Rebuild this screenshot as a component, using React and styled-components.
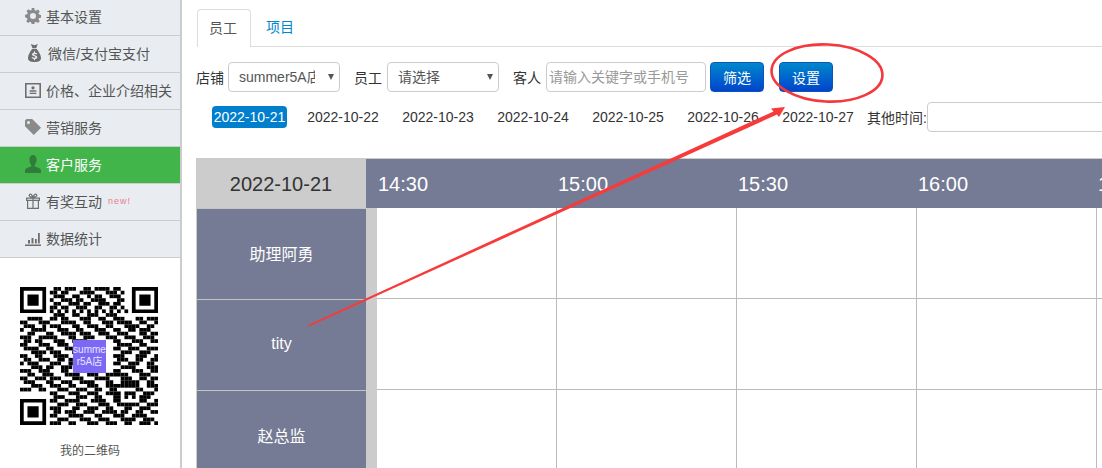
import React from "react";
import styled, { createGlobalStyle } from "styled-components";

const GlobalStyle = createGlobalStyle`
  html, body {
    margin: 0;
    padding: 0;
    background: #fff;
    overflow: hidden;
  }
  body {
    font-family: "Liberation Sans", "Noto Sans CJK SC", sans-serif;
    font-size: 14px;
    color: #333;
  }
`;

const Page = styled.div`
  position: relative;
  display: flex;
  width: 1102px;
  height: 468px;
  overflow: hidden;
`;

const Sidebar = styled.aside`
  flex: none;
  width: 180px;
  height: 468px;
  border-right: 2px solid #ccc;
`;

const MenuList = styled.div`
  background: #e9edf1;
`;

const MenuItem = styled.div`
  display: flex;
  align-items: center;
  box-sizing: border-box;
  height: ${({ $first }) => ($first ? "36px" : "37px")};
  padding-left: ${({ $indent }) => $indent || 25}px;
  padding-bottom: ${({ $first }) => ($first ? "3px" : "2px")};
  border-bottom: 1px solid #ccc;
  background: ${({ $active }) => ($active ? "#41b549" : "transparent")};
  color: ${({ $active }) => ($active ? "#fff" : "#555")};
  svg {
    flex: none;
    margin-right: ${({ $gap }) => $gap || 5}px;
  }
`;

const NewMark = styled.span`
  margin-left: 6px;
  font-size: 9px;
  letter-spacing: 1px;
  color: #ea7a92;
`;

const QrBlock = styled.div`
  display: flex;
  flex-direction: column;
  align-items: center;
  padding-top: 29px;
`;

const QrFrame = styled.div`
  position: relative;
  width: 138px;
  height: 138px;
  margin-left: -2px;
`;

const QrLogo = styled.div`
  position: absolute;
  left: 53px;
  top: 53px;
  width: 33px;
  height: 33px;
  padding-top: 4px;
  box-sizing: border-box;
  background: #7b68f5;
  color: #e8e4ff;
  font-size: 10px;
  line-height: 12px;
  text-align: center;
  word-break: break-all;
`;

const QrCaption = styled.div`
  margin-top: 16px;
  font-size: 12px;
  color: #555;
`;

const Main = styled.main`
  flex: 1;
  min-width: 0;
  padding: 9px 0 0 15px;
  overflow: hidden;
`;

const Tabs = styled.div`
  display: flex;
  height: 37px;
  border-bottom: 1px solid #ddd;
`;

const Tab = styled.div`
  box-sizing: border-box;
  width: ${({ $active }) => ($active ? "54px" : "auto")};
  height: ${({ $active }) => ($active ? "38px" : "37px")};
  padding: ${({ $active }) => ($active ? "0 2px 0 0" : "0 15px")};
  line-height: 37px;
  text-align: center;
  background: #fff;
  color: ${({ $active }) => ($active ? "#555" : "#0088cc")};
  border: ${({ $active }) => ($active ? "1px solid #ddd" : "none")};
  border-bottom: none;
  border-radius: 4px 4px 0 0;
`;

const FilterRow = styled.div`
  display: flex;
  align-items: center;
  height: 30px;
  margin-top: 15px;
  margin-left: -1px;
`;

const FieldLabel = styled.label`
  margin-right: ${({ $gap }) => $gap ?? 4}px;
  margin-left: ${({ $lead }) => $lead ?? 0}px;
  white-space: nowrap;
`;

const SelectBox = styled.div`
  position: relative;
  width: 112px;
  height: 30px;
  &::after {
    content: "";
    position: absolute;
    top: 12px;
    right: 6px;
    border-top: 6px solid #555;
    border-left: 3.5px solid transparent;
    border-right: 3.5px solid transparent;
    pointer-events: none;
  }
`;

const Select = styled.select`
  appearance: none;
  box-sizing: border-box;
  width: 100%;
  height: 100%;
  padding: 4px 24px 4px 10px;
  border: 1px solid #ccc;
  border-radius: 4px;
  background: #fff;
  color: #555;
  font: inherit;
`;

const TextInput = styled.input`
  box-sizing: border-box;
  width: ${({ $width }) => $width}px;
  height: 30px;
  padding: 4px 2px;
  flex: none;
  border: 1px solid #ccc;
  border-radius: 4px;
  font: inherit;
  &::placeholder {
    color: #999;
    opacity: 1;
  }
`;

const ActionButton = styled.button`
  box-sizing: border-box;
  width: 54px;
  height: 30px;
  margin-left: ${({ $lead }) => $lead}px;
  padding: 0;
  border: 1px solid #0a55b5;
  border-radius: 4px;
  background: linear-gradient(to bottom, #0088cc, #0044cc);
  color: #fff;
  font: inherit;
`;

const DateRow = styled.div`
  display: flex;
  align-items: center;
  height: 30px;
  margin-top: 10px;
  margin-left: 15px;
`;

const DateChip = styled.span`
  flex: none;
  width: ${({ $active }) => ($active ? "75px" : "72px")};
  height: 22px;
  margin-right: ${({ $active }) => ($active ? "20px" : "23px")};
  line-height: 23px;
  text-align: center;
  white-space: nowrap;
  border-radius: 4px;
  background: ${({ $active }) => ($active ? "#007fcc" : "transparent")};
  color: ${({ $active }) => ($active ? "#fff" : "#333")};
`;

const OtherLabel = styled.span`
  flex: none;
  margin-left: -10px;
  white-space: nowrap;
`;

const Schedule = styled.div`
  width: 1000px;
  margin-top: 26px;
  margin-left: -1px;
  border-top: 1px solid #ccc;
`;

const HeadRow = styled.div`
  display: flex;
  height: 49px;
`;

const DateHead = styled.div`
  flex: none;
  width: 170px;
  line-height: 50px;
  text-align: center;
  background: #ccc;
  font-size: 20px;
  color: #333;
`;

const TimeHead = styled.div`
  flex: 1;
  display: flex;
  padding-left: 12px;
  background: #757b94;
`;

const TimeLabel = styled.div`
  flex: none;
  width: 180px;
  line-height: 50px;
  font-size: 20px;
  color: #fff;
`;

const BodyRow = styled.div`
  display: flex;
  height: 91px;
`;

const NameCell = styled.div`
  flex: none;
  width: 170px;
  display: flex;
  align-items: center;
  justify-content: center;
  box-sizing: border-box;
  padding-bottom: 2px;
  border-top: 1px solid #c4c4c4;
  border-left: 1px solid #ccc;
  background: #757b94;
  color: #fff;
  font-size: 16px;
`;

const Gutter = styled.div`
  flex: none;
  width: 11px;
  background: #ccc;
`;

const Slot = styled.div`
  flex: none;
  box-sizing: border-box;
  width: 180px;
  border-right: 1px solid #bbb;
  border-bottom: 1px solid #bbb;
`;

const Annotation = styled.svg`
  position: absolute;
  left: 0;
  top: 0;
  pointer-events: none;
`;

const Icon = ({ w = 16, h = 16, children, fill = "#808080" }) => (
  <svg width={w} height={h} viewBox="0 0 16 16" preserveAspectRatio="none" fill={fill}>
    {children}
  </svg>
);

const GearIcon = () => (
  <Icon fill="#8a8a8a">
    <path
      fillRule="evenodd"
      d="M6.700 0h2.600l.4 2.200 1.300.6 1.900-1.300 1.900 1.900-1.300 1.900.6 1.300 2.200.4v2.600l-2.200.4-.6 1.300 1.300 1.900-1.900 1.900-1.900-1.300-1.300.6-.4 2.200H6.700l-.4-2.200-1.300-.6-1.900 1.300-1.900-1.900 1.300-1.900-.6-1.300L0 9.300V6.700l2.200-.4.6-1.300-1.300-1.900 1.900-1.900 1.900 1.300 1.300-.6zM8 5a3 3 0 1 0 0 6 3 3 0 0 0 0-6z"
    />
  </Icon>
);

const BagIcon = () => (
  <Icon w={13} h={18} fill="#6e6e6e">
    <path d="M3.500 0 8 1l4-1-1.800 3.600H5.400zM5.400 4.200h5C13 6.500 16 9.500 16 12.500c0 2.500-2.600 3.500-8 3.500s-8-1-8-3.500c0-3 2.800-6 5.400-8.300z" />
    <path d="M7.300 6.500h1.400v1.200c1.200.1 2.200.4 2.600.7l-.5 1c-.6-.4-1.400-.6-2.100-.6-.9 0-1.400.2-1.400.6 0 .5.700.6 1.800.8 1.500.3 2.400.7 2.400 1.600 0 .9-1 1.400-2.800 1.500v1.200H7.300v-1.200c-1.200-.1-2.300-.4-2.900-.8l.6-1c.7.400 1.600.7 2.500.7 1 0 1.600-.2 1.600-.6s-.6-.6-1.800-.8c-1.400-.3-2.300-.7-2.300-1.600 0-.9.900-1.400 2.300-1.500z" fill="#e9edf1" />
  </Icon>
);

const CardIcon = () => (
  <Icon h={15} fill="#6e6e6e">
    <path
      fillRule="evenodd"
      d="M0 0h16v16H0zm1.600 1.600v12.800h12.800V1.600zM8 3.400a1.700 1.700 0 1 1 0 3.400 1.700 1.700 0 0 1 0-3.400zM4.600 7.800h6.800v1.400H4.600zm0 2.600h6.800v1.400H4.600z"
    />
  </Icon>
);

const TagIcon = () => (
  <Icon fill="#8a8a8a">
    <path
      fillRule="evenodd"
      d="M0 1.500 1.500 0h5.700L16 8.800 8.800 16 0 7.200zM3.500 2a1.500 1.500 0 1 0 0 3 1.500 1.500 0 0 0 0-3z"
    />
  </Icon>
);

const PersonIcon = () => (
  <Icon h={18} fill="#2f7d3a">
    <path d="M8 0c2.300 0 3.600 1.700 3.600 4.200 0 1.900-.8 3.500-1.900 4.400v1.600c2.800.7 6.300 1.800 6.300 3.600V16H0v-2.200c0-1.800 3.500-2.900 6.300-3.600V8.600C5.200 7.700 4.400 6.100 4.400 4.200 4.400 1.700 5.700 0 8 0z" />
  </Icon>
);

const GiftIcon = () => (
  <Icon fill="#707070">
    <path
      fillRule="evenodd"
      d="M1 4.500h14V8h-1v8H2V8H1zm1.200 1.200v1.100h5.200V5.700zm6.400 0v1.100h5.200V5.700zM3.200 8v6.800h4.200V8zm5.400 0v6.800h4.200V8zM4 1.200C5 .1 6.800.4 8 3c1.200-2.600 3-2.900 4-1.800 1 1.200.2 2.800-2 3.300H6c-2.200-.5-3-2.100-2-3.300zm1 .8c-.5.600 0 1.300 1.800 1.600C6.200 2.200 5.500 1.500 5 2zm6 0c-.5-.5-1.200.2-1.800 1.600C11 3.300 11.500 2.600 11 2z"
    />
  </Icon>
);

const ChartIcon = () => (
  <Icon fill="#6e6e6e">
    <path d="M0 14.500h16V16H0zM3 10h2v3.500H3zm3.500-2h2v5.500h-2zM10 9h1.800v4.500H10zm3-6h1.800v10.500H13z" />
  </Icon>
);

const MENU = [
  { label: "基本设置", icon: <GearIcon /> },
  { label: "微信/支付宝支付", icon: <BagIcon />, indent: 28, gap: 7 },
  { label: "价格、企业介绍相关", icon: <CardIcon /> },
  { label: "营销服务", icon: <TagIcon /> },
  { label: "客户服务", icon: <PersonIcon />, active: true },
  { label: "有奖互动", icon: <GiftIcon />, badge: "new!" },
  { label: "数据统计", icon: <ChartIcon /> },
];

const DATES = ["2022-10-21", "2022-10-22", "2022-10-23", "2022-10-24", "2022-10-25", "2022-10-26", "2022-10-27"];
const TIMES = ["14:30", "15:00", "15:30", "16:00", "16:30"];
const STAFF = ["助理阿勇", "tity", "赵总监"];

// 37x37 modules, the three finder squares are drawn separately in QrCode
const QR_ROWS = [
  "00000000011011100110111101100 00000000",
  "00000000110110001111000111010 00000000",
  "00000000011100110010110011100 00000000",
  "00000000100111011001111000110 00000000",
  "00000000011001110110011101100 00000000",
  "00000000110110011100110011010 00000000",
  "00000000101010101010101010101 00000000",
  "00000000011100110011100111000 00000000",
  "0011110011011000111001100111000110111",
  "1100011100011110011000111011110011001",
  "0111001011100011001110011000111100110",
  "1001111000111001100011100110011011100",
  "0011000110011110111001110011100011011",
  "1110011111000110011100011100111001110",
  "0110110001110011110000000110001110011",
  "1100011100111001100000000011110011000",
  "0111100110001110000000000110011100111",
  "0001111011100011100000000001110011100",
  "1100110001111000100000000111000111001",
  "0110011100110111000000000011100110011",
  "1011100011100110000000000110011100110",
  "0001110110011100100000000001111000111",
  "1110011100011001110011100110001110011",
  "0011001110001111001110011111100011100",
  "1100111011100011100011110001110011011",
  "0111000110011100111100011001111100110",
  "0001110011100110001110011111111100111",
  "1110011000111001110011001100000110001",
  "00000000110001110011100111101110011100",
  "00000000011100011100110001101010111001",
  "00000000110011110001111001100000110011",
  "00000000001110011100011100111111001110",
  "00000000111000110011100110001100111000",
  "00000000011011100111001111011001100111",
  "00000000110001111000110001110011110001",
  "00000000001110001110011100011110011100",
  "00000000111001100011100111001100111011",
].map((row) => row.replace(" ", ""));

const Finder = ({ x, y }) => (
  <path
    fillRule="evenodd"
    d={`M${x} ${y}h7v7h-7zM${x + 1} ${y + 1}v5h5v-5zM${x + 2} ${y + 2}h3v3h-3z`}
  />
);

const QrCode = () => {
  const cells = [];
  QR_ROWS.forEach((row, r) => {
    row
      .slice(0, 37)
      .split("")
      .forEach((bit, c) => {
        const inFinder = (r < 8 && c < 8) || (r < 8 && c > 28) || (r > 28 && c < 8);
        if (bit === "1" && !inFinder) {
          cells.push(<rect key={`${r}-${c}`} x={c} y={r} width="1" height="1" />);
        }
      });
  });
  return (
    <svg width="138" height="138" viewBox="0 0 37 37">
      {cells}
      <Finder x={0} y={0} />
      <Finder x={30} y={0} />
      <Finder x={0} y={30} />
    </svg>
  );
};

export default function App() {
  return (
    <Page>
      <GlobalStyle />
      <Sidebar>
        <MenuList>
          {MENU.map((item, i) => (
            <MenuItem key={item.label} $first={i === 0} $active={item.active} $indent={item.indent} $gap={item.gap}>
              {item.icon}
              {item.label}
              {item.badge && <NewMark>{item.badge}</NewMark>}
            </MenuItem>
          ))}
        </MenuList>
        <QrBlock>
          <QrFrame>
            <QrCode />
            <QrLogo>summer5A店</QrLogo>
          </QrFrame>
          <QrCaption>我的二维码</QrCaption>
        </QrBlock>
      </Sidebar>
      <Main>
        <Tabs>
          <Tab $active>员工</Tab>
          <Tab>项目</Tab>
        </Tabs>
        <FilterRow>
          <FieldLabel>店铺</FieldLabel>
          <SelectBox>
            <Select defaultValue="summer5A店">
              <option>summer5A店</option>
            </Select>
          </SelectBox>
          <FieldLabel $lead={14} $gap={5}>员工</FieldLabel>
          <SelectBox>
            <Select defaultValue="请选择">
              <option>请选择</option>
            </Select>
          </SelectBox>
          <FieldLabel $lead={14} $gap={5}>客人</FieldLabel>
          <TextInput $width={160} placeholder="请输入关键字或手机号" />
          <ActionButton $lead={4}>筛选</ActionButton>
          <ActionButton $lead={15}>设置</ActionButton>
        </FilterRow>
        <DateRow>
          {DATES.map((date, i) => (
            <DateChip key={date} $active={i === 0}>
              {date}
            </DateChip>
          ))}
          <OtherLabel>其他时间:</OtherLabel>
          <TextInput $width={200} />
        </DateRow>
        <Schedule>
          <HeadRow>
            <DateHead>2022-10-21</DateHead>
            <TimeHead>
              {TIMES.map((time) => (
                <TimeLabel key={time}>{time}</TimeLabel>
              ))}
            </TimeHead>
          </HeadRow>
          {STAFF.map((name) => (
            <BodyRow key={name}>
              <NameCell>{name}</NameCell>
              <Gutter />
              {TIMES.map((time) => (
                <Slot key={time} />
              ))}
            </BodyRow>
          ))}
        </Schedule>
      </Main>
      <Annotation width="1102" height="468" viewBox="0 0 1102 468">
        <polygon points="308,325 773.500,111.500 771,108.500 785,107 779,117 777,114.500 309,326.500" fill="#f73a3a" />
        <ellipse
          cx="827"
          cy="73"
          rx="55.500"
          ry="28.500"
          fill="none"
          stroke="#f4383c"
          strokeWidth="2.600"
          transform="rotate(3 827 73)"
        />
      </Annotation>
    </Page>
  );
}
